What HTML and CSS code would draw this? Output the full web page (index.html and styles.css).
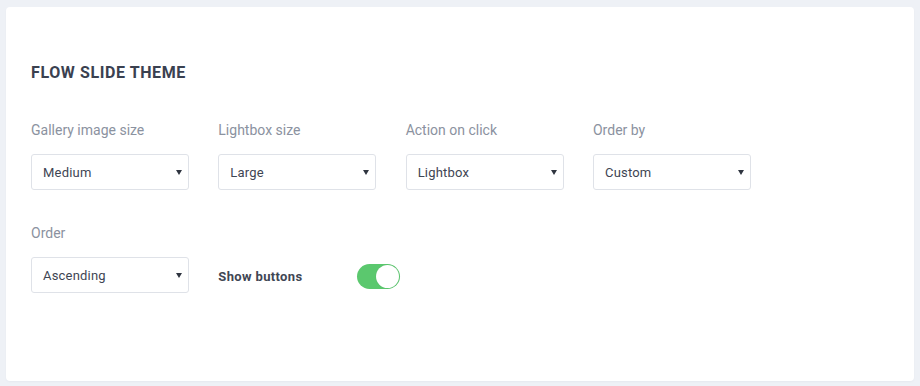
FILE: index.html
```html
<!DOCTYPE html>
<html>
<head>
<meta charset="utf-8">
<link rel="stylesheet" href="styles.css">
</head>
<body>
<div class="card">
  <h2 class="title">FLOW SLIDE THEME</h2>
  <div class="grid">
    <div class="field">
      <div class="label">Gallery image size</div>
      <div class="select"><span>Medium</span><span class="arrow"></span></div>
    </div>
    <div class="field">
      <div class="label">Lightbox size</div>
      <div class="select"><span>Large</span><span class="arrow"></span></div>
    </div>
    <div class="field">
      <div class="label">Action on click</div>
      <div class="select"><span>Lightbox</span><span class="arrow"></span></div>
    </div>
    <div class="field">
      <div class="label">Order by</div>
      <div class="select"><span>Custom</span><span class="arrow"></span></div>
    </div>
    <div class="field">
      <div class="label">Order</div>
      <div class="select"><span>Ascending</span><span class="arrow"></span></div>
    </div>
    <div class="field toggle-field">
      <span class="toggle-label">Show buttons</span>
      <span class="toggle"><span class="knob"></span></span>
    </div>
  </div>
</div>
</body>
</html>
```
FILE: styles.css
```css
html, body {
  margin: 0;
  padding: 0;
}
body {
  background: #eef1f6;
  padding: 7px 6px 5px 6px;
  font-family: Roboto, "Liberation Sans", sans-serif;
  height: 386px;
  box-sizing: border-box;
}
.card {
  background: #ffffff;
  border-radius: 4px;
  height: 374px;
  box-sizing: border-box;
  padding: 56px 25px 0 25px;
  box-shadow: 0 1px 2px rgba(40, 50, 70, 0.04);
}
.title {
  margin: 0;
  font-size: 16px;
  line-height: 20px;
  font-weight: 700;
  color: #3a4150;
  letter-spacing: 0.6px;
}
.grid {
  margin-top: 37px;
  display: grid;
  grid-template-columns: repeat(4, 158px);
  column-gap: 29.33px;
  row-gap: 33px;
}
.label {
  font-size: 14px;
  line-height: 20px;
  color: #8b92a0;
  margin-bottom: 14px;
}
.select {
  height: 36px;
  box-sizing: border-box;
  border: 1px solid #dfe2e8;
  border-radius: 3px;
  display: flex;
  align-items: center;
  justify-content: space-between;
  padding: 0 6px 0 11px;
  font-size: 13px;
  color: #3e4553;
  letter-spacing: 0.2px;
}
.arrow {
  width: 0;
  height: 0;
  border-left: 3px solid transparent;
  border-right: 3px solid transparent;
  border-top: 5px solid #2f3540;
  margin-top: 1px;
}
.toggle-field {
  display: flex;
  align-items: center;
  align-self: end;
  height: 36px;
  padding-top: 3px;
  box-sizing: border-box;
}
.toggle-label {
  flex-shrink: 0;
  font-size: 13px;
  font-weight: 700;
  color: #3f4654;
  letter-spacing: 0.35px;
  width: 139px;
}
.toggle {
  flex-shrink: 0;
  width: 43px;
  height: 25px;
  border-radius: 13px;
  background: #5bc86e;
  display: flex;
  align-items: center;
  justify-content: flex-end;
  padding: 0 1px;
  box-sizing: border-box;
}
.knob {
  width: 23px;
  height: 23px;
  border-radius: 50%;
  background: #ffffff;
  box-shadow: 0 0 1px rgba(0,0,0,0.15);
}
```
